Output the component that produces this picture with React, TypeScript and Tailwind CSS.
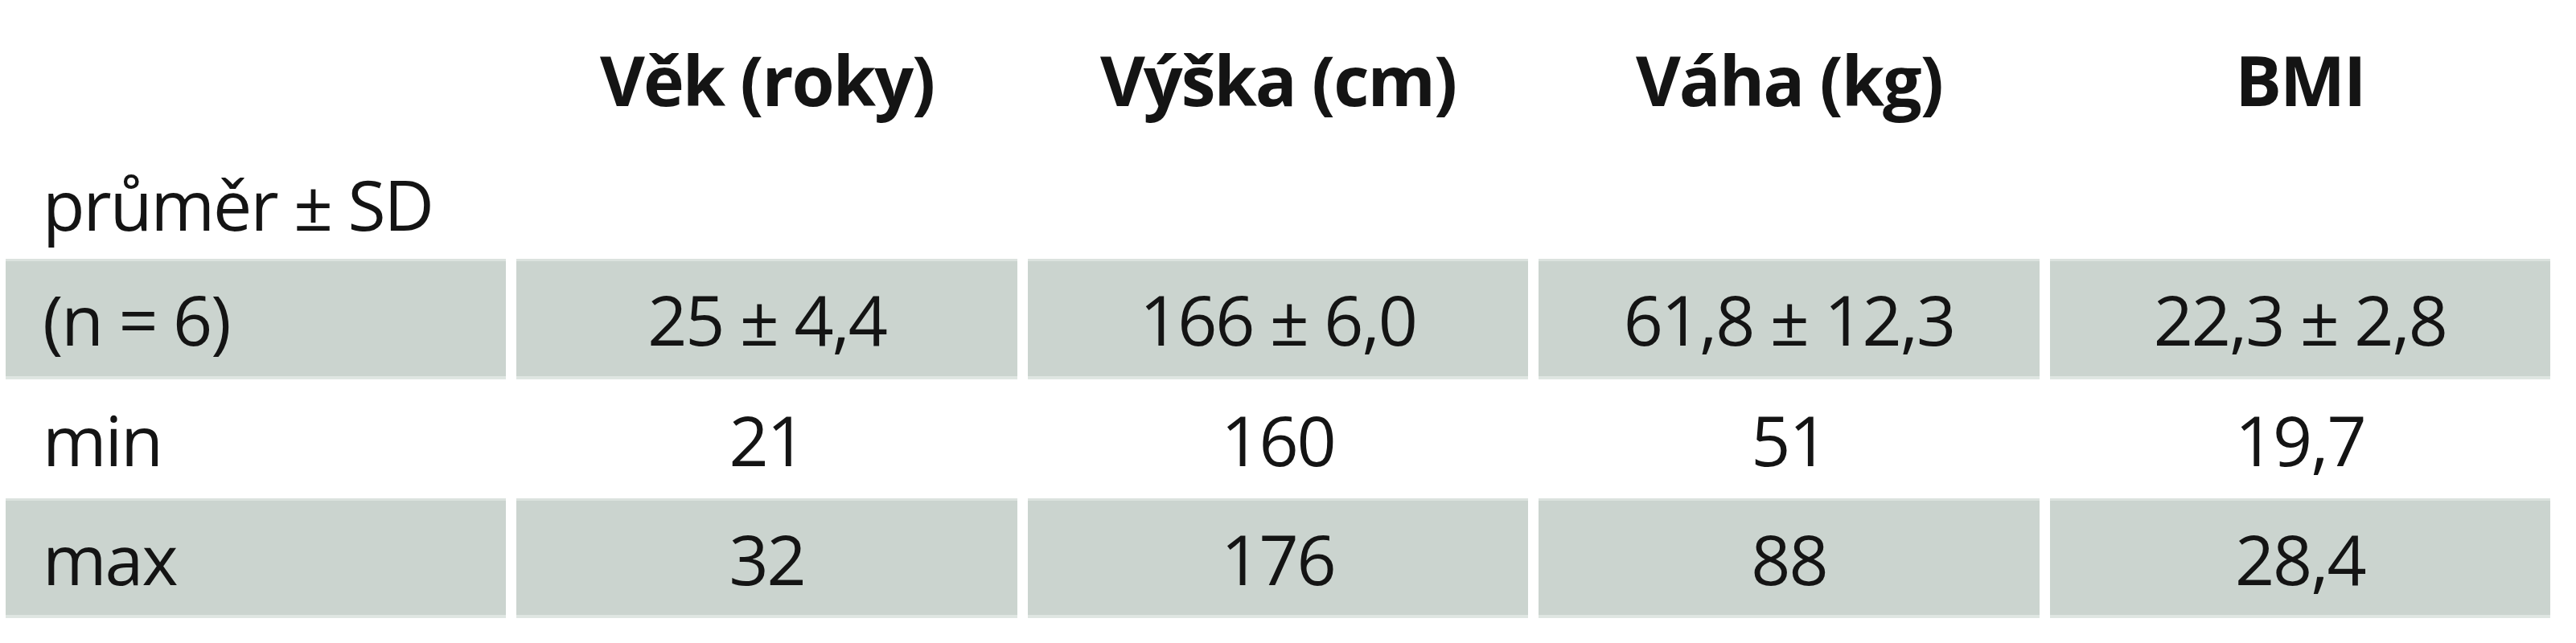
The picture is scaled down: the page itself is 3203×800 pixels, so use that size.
const headers = ['Věk (roky)', 'Výška (cm)', 'Váha (kg)', 'BMI'];

const rows = [
  { label: '(n = 6)', values: ['25 ± 4,4', '166 ± 6,0', '61,8 ± 12,3', '22,3 ± 2,8'], shaded: true },
  { label: 'min', values: ['21', '160', '51', '19,7'], shaded: false },
  { label: 'max', values: ['32', '176', '88', '28,4'], shaded: true },
];

const heights = ['h-[150px]', 'h-[148px]', 'h-[149px]'];

export default function App() {
  return (
    <div
      className="w-[3203px] h-[800px] bg-white text-[#141414] overflow-hidden"
      style={{ fontFamily: '"Open Sans", "Noto Sans", sans-serif' }}
    >
      <div className="w-[3171px] pl-[7px] grid grid-cols-5 gap-x-[13px] text-[86px] tracking-[-2px]">
        {/* header row */}
        <div className="h-[196px]" />
        {headers.map((h) => (
          <div key={h} className="h-[196px] flex items-center justify-center font-bold whitespace-nowrap">
            {h}
          </div>
        ))}

        {/* průměr ± SD label row */}
        <div className="h-[126px] flex items-center pb-[12px] pl-[46px] whitespace-nowrap">
          průměr ± SD
        </div>
        <div className="h-[126px]" />
        <div className="h-[126px]" />
        <div className="h-[126px]" />
        <div className="h-[126px]" />

        {/* data rows */}
        {rows.map((r, i) => {
          const cell = r.shaded
            ? 'bg-[#cbd4cf] border-t-[3px] border-b-[4px] border-t-[#dbe2de] border-b-[#dfe6e2]'
            : 'bg-white';
          return [
            <div
              key={r.label}
              className={`${heights[i]} ${cell} flex items-center pl-[46px] whitespace-nowrap`}
            >
              {r.label}
            </div>,
            ...r.values.map((v, j) => (
              <div
                key={r.label + j}
                className={`${heights[i]} ${cell} flex items-center justify-center whitespace-nowrap`}
              >
                {v}
              </div>
            )),
          ];
        })}
      </div>
    </div>
  );
}
